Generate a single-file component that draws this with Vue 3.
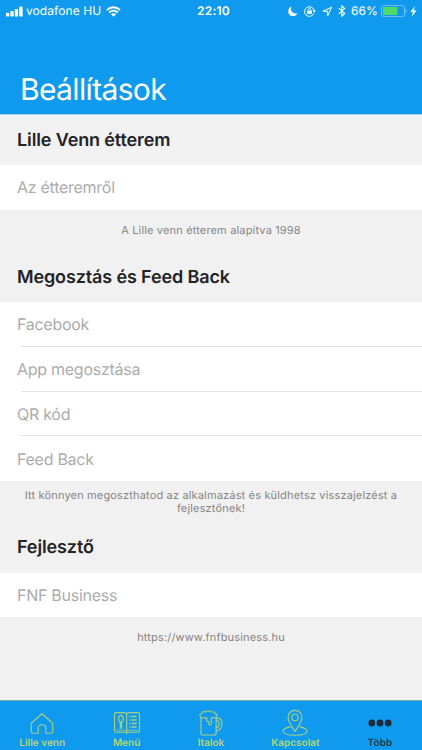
<script setup>
const sections = [
  { id: 'about', title: 'Lille Venn étterem', rows: ['Az étteremről'], note: ['A Lille venn étterem alapítva 1998'] },
  {
    id: 'share',
    title: 'Megosztás és Feed Back',
    rows: ['Facebook', 'App megosztása', 'QR kód', 'Feed Back'],
    note: ['Itt könnyen megoszthatod az alkalmazást és küldhetsz visszajelzést a', 'fejlesztőnek!'],
  },
  { id: 'dev', title: 'Fejlesztő', rows: ['FNF Business'], note: ['https://www.fnfbusiness.hu'] },
]
const tabs = [
  { id: 'home', label: 'Lille venn' },
  { id: 'menu', label: 'Menü' },
  { id: 'drinks', label: 'Italok' },
  { id: 'contact', label: 'Kapcsolat' },
  { id: 'more', label: 'Több' },
]
</script>

<template>
  <div class="screen">
    <header class="header">
      <div class="status">
        <div class="left">
          <svg class="signal" width="17" height="11" viewBox="0 0 17 11" fill="#fff">
            <rect x="0" y="6.8" width="3.3" height="3.7" rx=".7" /><rect x="4.4" y="5" width="3.3" height="5.5" rx=".7" />
            <rect x="8.8" y="2.9" width="3.3" height="7.6" rx=".7" /><rect x="13.2" y=".4" width="3.4" height="10.1" rx=".7" />
          </svg>
          <span class="carrier">vodafone HU</span>
          <svg class="wifi" width="15" height="11" viewBox="0 0 15 11" fill="none" stroke="#fff" stroke-width="1.8">
            <path d="M.9 4.1c3.7-3.8 9.5-3.8 13.2 0" /><path d="M3.2 6.5c2.4-2.4 6.2-2.4 8.6 0" />
            <path d="M5 8.2c1.4-1.4 3.6-1.4 5 0L7.5 10.8z" fill="#fff" stroke="none" />
          </svg>
        </div>
        <span class="time">22:10</span>
        <div class="right">
          <svg class="moon" width="10" height="11" viewBox="0 0 10 11"><path d="M3.4.6C2 5.3 5.1 8.5 9.6 7.2 8.4 9.3 6.8 10.1 5 10.1 2.3 10.1.3 8 .3 5.4.3 3.1 1.5 1.4 3.4.6z" fill="#fff" /></svg>
          <svg class="lock" width="12" height="11" viewBox="0 0 12 11" fill="none" stroke="#fff">
            <path d="M9.8 7.5A4.8 4.8 0 1 1 10 4.1" /><path d="M8.5 4.3h3.3L10.2 6.8z" fill="#fff" stroke="none" />
            <rect x="3.2" y="4.7" width="4.6" height="3.2" fill="#fff" stroke="none" /><path d="M4.2 4.9V3.8a1.3 1.3 0 0 1 2.6 0v1.1" stroke-width=".8" />
          </svg>
          <svg class="arrow" width="11" height="11" viewBox="0 0 11 11"><path d="M.9 5.3 9.6 1.2 5.7 9.9V5.3z" fill="none" stroke="#fff" stroke-linejoin="round" /></svg>
          <svg class="bluetooth" width="8" height="12" viewBox="0 0 8 12"><path d="M.8 3.2 6.7 8.5 3.8 11.2V.8l2.9 2.6L.8 8.8" fill="none" stroke="#fff" stroke-width="1.1" /></svg>
          <span class="percent">66%</span>
          <svg class="battery" width="26" height="12" viewBox="0 0 26 12">
            <rect x=".5" y=".5" width="23" height="11" rx="2.5" fill="none" stroke="#6dbcf3" />
            <rect x="2" y="2" width="14.3" height="8" rx="1" fill="#4cd964" /><path d="M24.5 4c1.5.6 1.5 3.4 0 4z" fill="#8bc9f5" />
          </svg>
          <svg class="bolt" width="7" height="11" viewBox="0 0 7 11"><path d="M4.7.3.4 6h2.4l-.9 4.6L6.6 4.5H4z" fill="#fff" /></svg>
        </div>
      </div>
      <h1>Beállítások</h1>
    </header>

    <main>
      <section v-for="s in sections" :key="s.id" :class="s.id">
        <h2><span>{{ s.title }}</span></h2>
        <ul><li v-for="row in s.rows" :key="row"><span>{{ row }}</span></li></ul>
        <p><span v-for="line in s.note" :key="line">{{ line }}</span></p>
      </section>
    </main>

    <nav class="tabs">
      <a v-for="t in tabs" :key="t.id" :class="['tab', t.id]">
        <svg v-if="t.id === 'home'" width="28" height="28" viewBox="0 0 28 28">
          <path d="M3.3 14.3 14 4.7l10.7 9.6v8.3q0 1.6-1.6 1.6h-5.3v-5.5q0-3-3.8-3t-3.8 3v5.5H4.9q-1.6 0-1.6-1.6z" />
        </svg>
        <svg v-else-if="t.id === 'menu'" width="28" height="28" viewBox="0 0 28 28">
          <path d="M13.6 4.8C12.9 3.9 12 3.6 11 3.6H3q-1.5 0-1.5 1.5v16.6q0 1.5 1.5 1.5h8.6q1.3 0 2 1.2q.7-1.2 2-1.2H25q1.5 0 1.5-1.5V5.1q0-1.5-1.5-1.5h-8.8c-1 0-1.9.3-2.6 1.2zV23.8" />
          <path d="M3.3 21.3h8.3q1.2 0 2 .8.8-.8 2-.8h9.1" stroke-width=".8" />
          <ellipse cx="7.9" cy="9.7" rx="2.3" ry="3.3" /><path d="M7.3 13v6.2h1.2V13" />
          <path d="M16.3 7.5h1.3m.8 0h5.2M16.3 11h1.3m.8 0h5.2M16.3 14.5h1.3m.8 0h5.2M16.3 18h1.3m.8 0h5.2" stroke-width="1.4" />
        </svg>
        <svg v-else-if="t.id === 'drinks'" width="28" height="28" viewBox="0 0 28 28">
          <path d="M4.9 8.7C2.2 8 2.2 4.6 4.9 4.5 5 2.6 7.7 1.8 9 3.2c1.2-1.8 4.1-1.8 5.2 0 2-1.1 4-.1 4 1.7 2.7 0 2.8 3.1.4 3.7-1.4.4-2.4.1-3-.5-.4.7-.8 1.1-1.3 1.3v5.2c0 2-2.5 2-2.5 0v-2.3c-.7.9-2 .4-2-.6V8.8c-.9.5-1.6.4-2.2-.1-.7.5-1.6.5-2.7 0z" />
          <path d="M4 8.1V24q0 2 2 2h11.1q2 0 2-2V8.7M19.1 9.4H21q4 0 4 4.6c0 4.5-2.4 7.4-5.9 7.9m0-10h1.3c3.3 0 2.1 6-1.3 7.2" />
        </svg>
        <svg v-else-if="t.id === 'contact'" width="28" height="28" viewBox="0 0 28 28">
          <path d="M14 22.5C11 17.7 7.1 12.9 7.1 8.4 7.1 4.1 10 1.3 14 1.3s6.9 2.8 6.9 7.1c0 4.5-3.9 9.3-6.9 14.1z" />
          <circle cx="14" cy="8.4" r="3.2" /><path d="M9.5 17.9C-1.2 19.4-1.2 26.2 14 26.2s15.2-6.8 4.5-8.3" />
        </svg>
        <svg v-else width="28" height="28" viewBox="0 0 28 28" class="dots">
          <circle cx="5.8" cy="14" r="3.4" /><circle cx="14" cy="14" r="3.4" /><circle cx="22.2" cy="14" r="3.4" />
        </svg>
        <span>{{ t.label }}</span>
      </a>
    </nav>
  </div>
</template>

<style>
body { margin: 0; }
</style>

<style scoped>
.screen { width: 422px; height: 750px; display: flex; flex-direction: column; overflow: hidden; background: #f1f1f1; font-family: Inter, "Liberation Sans", sans-serif; text-rendering: geometricPrecision; }
.header { height: 115px; box-sizing: border-box; background: #109aed; border-bottom: 1px solid #a5cde6; flex: none; }
.status { display: grid; grid-template-columns: 1fr auto 1fr; align-items: center; height: 22px; padding: 0 5px 0 6px; color: #fff; font-size: 12px; line-height: 22px; }
.left, .right { display: flex; align-items: center; }
.right { justify-content: flex-end; }
.carrier { margin: 0 5px 0 3px; letter-spacing: .08px; }
.time { padding-left: 4px; font-weight: 600; letter-spacing: .2px; }
.lock { margin-left: 6px; }
.arrow { margin-left: 6px; }
.bluetooth { margin-left: 5px; }
.percent { margin: 0 3px 0 5px; letter-spacing: .1px; }
.bolt { margin-left: 3px; }
h1 { margin: 0; padding: 48px 0 0 20px; color: #fff; font-size: 30px; line-height: 40px; font-weight: 400; letter-spacing: -.65px; }
main { flex: 1; display: flex; flex-direction: column; }
h2 { box-sizing: border-box; margin: 0; height: 51px; padding: 1px 0 0 17px; line-height: 50px; font-size: 18px; font-weight: 600; color: #232327; letter-spacing: -.13px; }
ul { margin: 0; padding: 0; list-style: none; background: #fff; }
li { height: 44.75px; box-sizing: border-box; display: flex; align-items: center; padding-left: 17px; color: #acacac; font-size: 16px; line-height: 22px; letter-spacing: -.27px; background: linear-gradient(#e2e2e2, #e2e2e2) 21px 100% / 100% 1px no-repeat; }
li:last-child { background: none; }
p { margin: 0; display: flex; flex-direction: column; align-items: center; color: #858585; font-size: 11px; line-height: 13px; letter-spacing: .16px; }
.about h2 { height: 50px; }
.about p { padding-top: 14px; }
.about { height: 136px; }
.share { height: 270px; }
.share h2 { padding-top: 1.5px; }
.share p { padding-top: 8px; }
.dev h2 { height: 51.5px; padding-top: 2px; }
.dev p { padding-top: 14px; }
.tabs { height: 50px; flex: none; box-sizing: border-box; display: grid; grid-template-columns: repeat(5, 1fr); background: #109aed; border-top: 1px solid #6fb59f; }
.tab { display: flex; flex-direction: column; align-items: center; padding-top: 8px; color: #b4d477; font-size: 10px; line-height: 13px; font-weight: 600; }
.tab svg { fill: none; stroke: #a7cd83; stroke-width: 1.15; stroke-linejoin: round; }
.tab.more { color: #203849; }
.tab svg.dots { fill: #172c3c; stroke: none; }
</style>
